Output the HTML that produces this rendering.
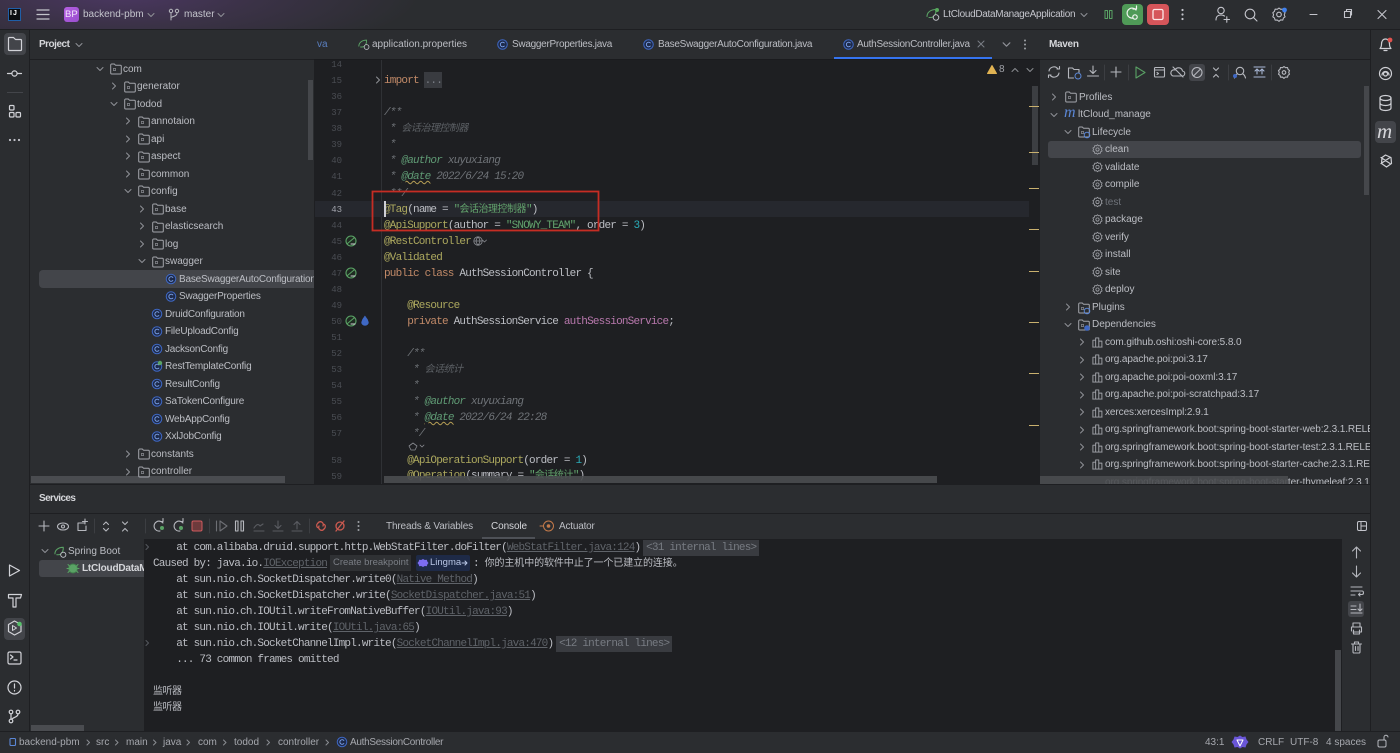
<!DOCTYPE html>
<html><head><meta charset="utf-8"><style>
html,body{margin:0;padding:0;width:1400px;height:753px;overflow:hidden;background:#2b2d30}
body{position:relative;font-family:"Liberation Sans","Noto Sans CJK SC",sans-serif;font-size:10px;color:#bcbec4}
.b{position:absolute}
.t{position:absolute;white-space:pre;line-height:16px;height:16px;margin-top:1px}
.q{letter-spacing:-.2px}
.h{letter-spacing:-.28px}
.v{letter-spacing:-.08px}
.m{font-family:"Liberation Mono","Noto Sans CJK SC",monospace;font-size:11px;letter-spacing:-.8px;color:#bcbec4}
.n{position:absolute;width:20px;left:322px;margin-top:1px;text-align:right;font-family:"Liberation Mono",monospace;font-size:9px;line-height:16px;color:#4a4d53}
.k{color:#c28a68}.a{color:#aca85e}.s{color:#62a26c}.c{color:#6f7378;font-style:italic}.d{color:#5f9a74;font-style:italic}.u{color:#2aacb8}.f{color:#b878ad}
.z{font-size:10px;letter-spacing:-.5px}
.l{color:#5f6369;text-decoration:underline;text-underline-offset:1px}
.chip{background:#393b40;color:#777b82;padding:0 3px;margin-left:-3px;display:inline-block;height:16px}
.w{text-decoration:underline wavy #b79f55 1px}
svg{position:absolute;left:0;top:0}
</style></head><body>
<!-- title bar -->
<div class="b" style="left:0;top:0;width:1400px;height:29px;background:radial-gradient(ellipse 300px 70px at 120px -6px,#4b3762 0%,#3b3247 45%,#2b2d30 100%)"></div>
<div class="b" style="left:0;top:29px;width:1400px;height:1px;background:#1e1f22"></div>
<div class="b" style="left:8px;top:8px;width:13px;height:13px;background:#0c0d10;border:1px solid #1f5fa8;box-sizing:border-box"></div>
<div class="t" style="left:10px;top:5px;font-size:7px;font-weight:bold;color:#fff;letter-spacing:1px">IJ</div>
<div class="b" style="left:64px;top:7px;width:15px;height:15px;border-radius:3px;background:linear-gradient(135deg,#b45fe0,#9a4fd0)"></div>
<div class="t" style="left:65px;top:6px;font-size:9.5px;color:#f0e4fa">BP</div>
<div class="t" style="left:83px;top:6px;color:#c4c5cc">backend-pbm</div>
<div class="t" style="left:184px;top:6px;color:#c4c5cc">master</div>
<div class="t" style="left:943px;top:6px;color:#c4c5cc;letter-spacing:-.3px">LtCloudDataManageApplication</div>
<div class="b" style="left:1122px;top:4px;width:21px;height:21px;border-radius:4px;background:#4f9a57"></div>
<div class="b" style="left:1147px;top:4px;width:22px;height:21px;border-radius:4px;background:#d5555a"></div>

<!-- left strip selection -->
<div class="b" style="left:29px;top:30px;width:1px;height:701px;background:#1e1f22"></div>
<div class="b" style="left:4px;top:33px;width:22px;height:22px;border-radius:4px;background:#43454a"></div>
<div class="b" style="left:7px;top:92px;width:16px;height:1px;background:#43454a"></div>
<div class="b" style="left:4px;top:618px;width:21px;height:22px;border-radius:4px;background:#43454a"></div>

<!-- project -->
<div class="t" style="left:39px;top:36px;font-weight:bold;color:#d5d6da;letter-spacing:-.5px">Project</div>
<div class="b" style="left:30px;top:59px;width:284px;height:1px;background:#1e1f22"></div>
<div class="b" style="left:39px;top:270px;width:275px;height:18px;background:#43454a;border-radius:4px 0 0 4px"></div>
<div class="t" style="left:123px;top:61px">com</div>
<div class="t" style="left:137px;top:78px">generator</div>
<div class="t" style="left:137px;top:96px">todod</div>
<div class="t" style="left:151px;top:113px">annotaion</div>
<div class="t" style="left:151px;top:131px">api</div>
<div class="t" style="left:151px;top:148px">aspect</div>
<div class="t" style="left:151px;top:166px">common</div>
<div class="t" style="left:151px;top:183px">config</div>
<div class="t" style="left:165px;top:201px">base</div>
<div class="t" style="left:165px;top:218px">elasticsearch</div>
<div class="t" style="left:165px;top:236px">log</div>
<div class="t" style="left:165px;top:253px">swagger</div>
<div class="t q" style="left:179px;top:271px">BaseSwaggerAutoConfiguration</div>
<div class="t q" style="left:179px;top:288px">SwaggerProperties</div>
<div class="t q" style="left:165px;top:306px">DruidConfiguration</div>
<div class="t q" style="left:165px;top:323px">FileUploadConfig</div>
<div class="t q" style="left:165px;top:341px">JacksonConfig</div>
<div class="t q" style="left:165px;top:358px">RestTemplateConfig</div>
<div class="t q" style="left:165px;top:376px">ResultConfig</div>
<div class="t q" style="left:165px;top:393px">SaTokenConfigure</div>
<div class="t q" style="left:165px;top:411px">WebAppConfig</div>
<div class="t q" style="left:165px;top:428px">XxlJobConfig</div>
<div class="t" style="left:151px;top:446px">constants</div>
<div class="t" style="left:151px;top:463px">controller</div>
<div class="b" style="left:308px;top:80px;width:5px;height:80px;background:#45474b"></div>
<div class="b" style="left:31px;top:476px;width:254px;height:7px;background:#4a4c50"></div>

<!-- editor -->
<div class="b" style="left:314px;top:30px;width:726px;height:454px;background:#1e1f22"></div>
<div class="b" style="left:314px;top:30px;width:726px;height:29px;background:#2b2d30"></div>
<div class="b" style="left:314px;top:59px;width:726px;height:1px;background:#1a1b1e"></div>
<div class="b" style="left:834px;top:57px;width:158px;height:2px;background:#3574f0"></div>
<div class="t" style="left:317px;top:36px;color:#5a7fc0">va</div>
<div class="t" style="left:372px;top:36px">application.properties</div>
<div class="t h" style="left:512px;top:36px">SwaggerProperties.java</div>
<div class="t h" style="left:658px;top:36px">BaseSwaggerAutoConfiguration.java</div>
<div class="t h" style="left:857px;top:36px">AuthSessionController.java</div>
<div class="b" style="left:381px;top:60px;width:1px;height:424px;background:#2f3135"></div>
<div class="b" style="left:315px;top:201px;width:714px;height:16px;background:#26282e"></div>
<div class="t" style="left:999px;top:61px;color:#a0a2a8">8</div>

<div class="n" style="top:56px">14</div><div class="n" style="top:72px">15</div><div class="n" style="top:88px">36</div><div class="n" style="top:104px">37</div><div class="n" style="top:120px">38</div><div class="n" style="top:136px">39</div><div class="n" style="top:152px">40</div><div class="n" style="top:168px">41</div><div class="n" style="top:185px">42</div><div class="n" style="top:201px;color:#a1a3ab">43</div><div class="n" style="top:217px">44</div><div class="n" style="top:233px">45</div><div class="n" style="top:249px">46</div><div class="n" style="top:265px">47</div><div class="n" style="top:281px">48</div><div class="n" style="top:297px">49</div><div class="n" style="top:313px">50</div><div class="n" style="top:329px">51</div><div class="n" style="top:345px">52</div><div class="n" style="top:361px">53</div><div class="n" style="top:377px">54</div><div class="n" style="top:393px">55</div><div class="n" style="top:409px">56</div><div class="n" style="top:425px">57</div><div class="n" style="top:452px">58</div><div class="n" style="top:468px">59</div>

<div class="b" style="left:424px;top:72px;width:18px;height:16px;background:#393b40"></div>
<div class="t m" style="left:384px;top:72px"><span class="k">import</span> <span style="color:#7a7e85">...</span></div>
<div class="t m c" style="left:384px;top:104px">/**</div>
<div class="t m c" style="left:384px;top:120px"> * <span class="z" style="color:#5c6065">会话治理控制器</span></div>
<div class="t m c" style="left:384px;top:136px"> *</div>
<div class="t m c" style="left:384px;top:152px"> * <span class="d">@author</span> xuyuxiang</div>
<div class="t m c" style="left:384px;top:168px"> * <span class="d w">@date</span> 2022/6/24 15:20</div>
<div class="t m c" style="left:384px;top:185px"> **/</div>
<div class="t m" style="left:384px;top:201px"><span class="a">@Tag</span>(name = <span class="s">"<span class="z">会话治理控制器</span>"</span>)</div>
<div class="t m" style="left:384px;top:217px"><span class="a">@ApiSupport</span>(author = <span class="s">"SNOWY_TEAM"</span>, order = <span class="u">3</span>)</div>
<div class="t m a" style="left:384px;top:233px">@RestController</div>
<div class="t m a" style="left:384px;top:249px">@Validated</div>
<div class="t m" style="left:384px;top:265px"><span class="k">public class</span> AuthSessionController {</div>
<div class="t m a" style="left:384px;top:297px">    @Resource</div>
<div class="t m" style="left:384px;top:313px">    <span class="k">private</span> AuthSessionService <span class="f">authSessionService</span>;</div>
<div class="t m c" style="left:384px;top:345px">    /**</div>
<div class="t m c" style="left:384px;top:361px">     * <span class="z" style="color:#5c6065">会话统计</span></div>
<div class="t m c" style="left:384px;top:377px">     *</div>
<div class="t m c" style="left:384px;top:393px">     * <span class="d">@author</span> xuyuxiang</div>
<div class="t m c" style="left:384px;top:409px">     * <span class="d w">@date</span> 2022/6/24 22:28</div>
<div class="t m c" style="left:384px;top:425px">     */</div>
<div class="t m" style="left:384px;top:452px">    <span class="a">@ApiOperationSupport</span>(order = <span class="u">1</span>)</div>
<div class="t m" style="left:384px;top:467px">    <span class="a">@Operation</span>(summary = <span class="s">"<span class="z">会话统计</span>"</span>)</div>
<div class="b" style="left:384px;top:201px;width:1.5px;height:16px;background:#ced0d6"></div>
<div class="b" style="left:1032px;top:86px;width:6px;height:79px;background:#3c3e42"></div>
<div class="b" style="left:1029px;top:106px;width:10px;height:1px;background:#c9b06e"></div>
<div class="b" style="left:1029px;top:152px;width:10px;height:1px;background:#c9b06e"></div>
<div class="b" style="left:1029px;top:188px;width:10px;height:1px;background:#c9b06e"></div>
<div class="b" style="left:1029px;top:229px;width:10px;height:1px;background:#c9b06e"></div>
<div class="b" style="left:1029px;top:271px;width:10px;height:1px;background:#c9b06e"></div>
<div class="b" style="left:1029px;top:322px;width:10px;height:1px;background:#c9b06e"></div>
<div class="b" style="left:1029px;top:373px;width:10px;height:1px;background:#c9b06e"></div>
<div class="b" style="left:1029px;top:425px;width:10px;height:1px;background:#c9b06e"></div>
<div class="b" style="left:384px;top:476px;width:553px;height:7px;background:#4a4c50;opacity:.9"></div>

<!-- maven -->
<div class="b" style="left:1040px;top:30px;width:332px;height:454px;background:#2b2d30"></div>
<div class="t" style="left:1049px;top:36px;font-weight:bold;color:#d5d6da;letter-spacing:-.3px">Maven</div>
<div class="b" style="left:1040px;top:59px;width:331px;height:1px;background:#1e1f22"></div>
<div class="b" style="left:1189px;top:64px;width:16px;height:17px;border-radius:3px;background:#43454a"></div>
<div class="b" style="left:1048px;top:141px;width:313px;height:17px;border-radius:3px;background:#43454a"></div>
<div class="t" style="left:1079px;top:89px">Profiles</div>
<div class="t" style="left:1064px;top:104px;font-family:'Liberation Serif',serif;font-style:italic;font-size:16px;color:#5b87d6">m</div>
<div class="t" style="left:1078px;top:106px">ltCloud_manage</div>
<div class="t" style="left:1092px;top:124px">Lifecycle</div>
<div class="t" style="left:1105px;top:141px">clean</div>
<div class="t" style="left:1105px;top:159px">validate</div>
<div class="t" style="left:1105px;top:176px">compile</div>
<div class="t" style="left:1105px;top:194px;color:#6f737a">test</div>
<div class="t" style="left:1105px;top:211px">package</div>
<div class="t" style="left:1105px;top:229px">verify</div>
<div class="t" style="left:1105px;top:246px">install</div>
<div class="t" style="left:1105px;top:264px">site</div>
<div class="t" style="left:1105px;top:281px">deploy</div>
<div class="t" style="left:1092px;top:299px">Plugins</div>
<div class="t" style="left:1092px;top:316px">Dependencies</div>
<div class="t v" style="left:1105px;top:334px">com.github.oshi:oshi-core:5.8.0</div>
<div class="t v" style="left:1105px;top:351px">org.apache.poi:poi:3.17</div>
<div class="t v" style="left:1105px;top:369px">org.apache.poi:poi-ooxml:3.17</div>
<div class="t v" style="left:1105px;top:386px">org.apache.poi:poi-scratchpad:3.17</div>
<div class="t v" style="left:1105px;top:404px">xerces:xercesImpl:2.9.1</div>
<div class="t v" style="left:1105px;top:421px">org.springframework.boot:spring-boot-starter-web:2.3.1.RELEASE</div>
<div class="t v" style="left:1105px;top:439px">org.springframework.boot:spring-boot-starter-test:2.3.1.RELEASE</div>
<div class="t v" style="left:1105px;top:456px">org.springframework.boot:spring-boot-starter-cache:2.3.1.RELEASE</div>
<div class="t v" style="left:1105px;top:474px">org.springframework.boot:spring-boot-starter-thymeleaf:2.3.1</div>
<div class="b" style="left:1364px;top:86px;width:5px;height:109px;background:#45474b"></div>
<div class="b" style="left:1040px;top:476px;width:248px;height:8px;background:#4a4c50;opacity:.9"></div>

<!-- right strip -->
<div class="b" style="left:1370px;top:30px;width:30px;height:701px;background:#2b2d30"></div>
<div class="b" style="left:1370px;top:30px;width:1px;height:701px;background:#1e1f22"></div>
<div class="b" style="left:1375px;top:121px;width:21px;height:22px;border-radius:4px;background:#43454a"></div>
<div class="t" style="left:1377px;top:122px;font-family:'Liberation Serif',serif;font-style:italic;font-size:21px;color:#d5d6da">m</div>

<!-- bottom panel -->
<div class="b" style="left:30px;top:484px;width:1340px;height:247px;background:#2b2d30"></div>
<div class="b" style="left:30px;top:484px;width:1340px;height:1px;background:#1e1f22"></div>
<div class="b" style="left:30px;top:513px;width:1340px;height:1px;background:#1e1f22"></div>
<div class="t" style="left:39px;top:490px;font-weight:bold;color:#d5d6da;letter-spacing:-.6px">Services</div>
<div class="t" style="left:386px;top:518px;letter-spacing:-.15px">Threads &amp; Variables</div>
<div class="t" style="left:491px;top:518px;color:#d5d6da;letter-spacing:-.1px">Console</div>
<div class="t" style="left:559px;top:518px;letter-spacing:-.2px">Actuator</div>
<div class="b" style="left:482px;top:537px;width:53px;height:2px;background:#4e5157"></div>
<div class="b" style="left:39px;top:560px;width:105px;height:17px;border-radius:3px 0 0 3px;background:#43454a"></div>
<div class="t" style="left:68px;top:543px">Spring Boot</div>
<div class="t" style="left:82px;top:560px;font-weight:bold;color:#d5d6da;letter-spacing:-.2px">LtCloudDataManageApplication</div>
<div class="b" style="left:31px;top:725px;width:53px;height:6px;background:#4a4c50"></div>

<div class="b" style="left:144px;top:539px;width:1198px;height:192px;background:#1e1f22"></div>
<div class="t m" style="left:153px;top:539px">    at com.alibaba.druid.support.http.WebStatFilter.doFilter(<span class="l">WebStatFilter.java:124</span>) <span class="chip">&lt;31 internal lines&gt;</span></div>
<div class="t m" style="left:153px;top:555px">Caused by: java.io.<span class="l">IOException</span></div>
<div class="b" style="left:330px;top:555px;width:81px;height:16px;background:#2f3134"></div>
<div class="t" style="left:333px;top:554px;font-size:9.5px;color:#7a7e85">Create breakpoint</div>
<div class="b" style="left:416px;top:555px;width:54px;height:16px;background:#1e2a47;border-radius:2px"></div>
<div class="t" style="left:430px;top:554px;font-size:9.5px;color:#b9c6e6">Lingma</div>
<div class="t m" style="left:473px;top:555px">: <span class="z" style="letter-spacing:-.1px">你的主机中的软件中止了一个已建立的连接。</span></div>
<div class="t m" style="left:153px;top:571px">    at sun.nio.ch.SocketDispatcher.write0(<span class="l">Native Method</span>)</div>
<div class="t m" style="left:153px;top:587px">    at sun.nio.ch.SocketDispatcher.write(<span class="l">SocketDispatcher.java:51</span>)</div>
<div class="t m" style="left:153px;top:603px">    at sun.nio.ch.IOUtil.writeFromNativeBuffer(<span class="l">IOUtil.java:93</span>)</div>
<div class="t m" style="left:153px;top:619px">    at sun.nio.ch.IOUtil.write(<span class="l">IOUtil.java:65</span>)</div>
<div class="t m" style="left:153px;top:635px">    at sun.nio.ch.SocketChannelImpl.write(<span class="l">SocketChannelImpl.java:470</span>) <span class="chip">&lt;12 internal lines&gt;</span></div>
<div class="t m" style="left:153px;top:651px">    ... 73 common frames omitted</div>
<div class="t m" style="left:153px;top:683px"><span class="z" style="letter-spacing:-.5px">监听器</span></div>
<div class="t m" style="left:153px;top:699px"><span class="z" style="letter-spacing:-.5px">监听器</span></div>
<div class="b" style="left:1335px;top:650px;width:6px;height:81px;background:#45474b"></div>
<div class="b" style="left:1348px;top:601px;width:16px;height:16px;border-radius:3px;background:#43454a"></div>

<!-- status -->
<div class="b" style="left:0;top:731px;width:1400px;height:22px;background:#2b2d30;border-top:1px solid #1e1f22;box-sizing:border-box"></div>
<div class="t" style="left:19px;top:734px;color:#a6a8ae">backend-pbm</div>
<div class="t" style="left:96px;top:734px;color:#a6a8ae">src</div>
<div class="t" style="left:126px;top:734px;color:#a6a8ae">main</div>
<div class="t" style="left:163px;top:734px;color:#a6a8ae">java</div>
<div class="t" style="left:198px;top:734px;color:#a6a8ae">com</div>
<div class="t" style="left:234px;top:734px;color:#a6a8ae">todod</div>
<div class="t" style="left:278px;top:734px;color:#a6a8ae">controller</div>
<div class="t" style="left:350px;top:734px;color:#a6a8ae;letter-spacing:-.3px">AuthSessionController</div>
<div class="t" style="left:1205px;top:734px;color:#a6a8ae">43:1</div>
<div class="t" style="left:1258px;top:734px;color:#a6a8ae">CRLF</div>
<div class="t" style="left:1290px;top:734px;color:#a6a8ae">UTF-8</div>
<div class="t" style="left:1326px;top:734px;color:#a6a8ae">4 spaces</div>

<!-- icons -->
<svg width="1400" height="753" viewBox="0 0 1400 753" fill="none" stroke-linecap="round" stroke-linejoin="round">
<defs>
<symbol id="cr" viewBox="0 0 8 8"><path d="M2.5 1l3 3-3 3" stroke="#8f9197" fill="none"/></symbol>
<symbol id="cd" viewBox="0 0 8 8"><path d="M1 2.5l3 3 3-3" stroke="#8f9197" fill="none"/></symbol>
<symbol id="fo" viewBox="0 0 12 12"><path d="M.7 10V2a1 1 0 0 1 1-1h2.6l1.3 1.3h4.700a1 1 0 0 1 1 1V10a1 1 0 0 1-1 1h-8.600a1 1 0 0 1-1-1z" stroke="#a3a5ab" fill="none"/><rect x="3.400" y="5.400" width="2.200" height="2.200" stroke="#8a8c92" stroke-width=".7" fill="none"/></symbol>
<symbol id="cl" viewBox="0 0 12 12"><circle cx="6" cy="6" r="5.200" stroke="#3f68c4" fill="#1d2a4a" stroke-width="1.100"/><path d="M8 4.300a2.500 2.500 0 1 0 0 3.400" stroke="#7ea4ee" fill="none"/></symbol>
<symbol id="ge" viewBox="0 0 12 12"><path d="M6 .8l1.200 1.200 1.800-.2.400 1.700 1.600.9-.7 1.600.7 1.600-1.600.9-.4 1.700-1.800-.2L6 11.200l-1.200-1.200-1.800.2-.4-1.700-1.600-.9.7-1.600-.7-1.600 1.600-.9.4-1.700 1.800.2z" stroke="#a3a5ab" stroke-width=".9" fill="none"/><circle cx="6" cy="6" r="1.800" stroke="#a3a5ab" stroke-width=".9" fill="none"/></symbol>
<symbol id="li" viewBox="0 0 12 12"><path d="M1 11V3.500h3V11M4 11V1h3.400v10M7.400 11V4.500h3.400V11M.8 11h10.200" stroke="#a3a5ab" fill="none"/></symbol>
<symbol id="sb" viewBox="0 0 14 14"><path d="M1 9.500c0-4 3.500-7 9-7 .2 4-1.500 8-5.500 8H3" stroke="#5aa265" stroke-width="1.100" fill="none"/><circle cx="10" cy="10.500" r="2.800" stroke="#c8cad0" stroke-width=".9" fill="#2b2d30"/></symbol>
<symbol id="bn" viewBox="0 0 12 12"><circle cx="6" cy="6" r="5" stroke="#5aa265" stroke-width="1.100" fill="#1f2b22"/><path d="M2.500 8.500L9 3" stroke="#5aa265" fill="none"/><path d="M6 9h4" stroke="#d0d2d6" fill="none"/></symbol>
</defs>

<!-- title icons -->
<g stroke="#c4c5cc" stroke-width="1.200"><path d="M37 10h12M37 14.500h12M37 19h12"/></g>
<use href="#cd" x="147" y="11" width="8" height="8"/>
<g stroke="#b6b7bd"><circle cx="171" cy="11" r="1.700"/><circle cx="177" cy="11" r="1.700"/><path d="M171 13v7M177 13c0 3-3 3-6 4.500"/></g>
<use href="#cd" x="217" y="11" width="8" height="8"/>
<use href="#sb" x="926" y="7" width="14" height="14"/>
<circle cx="937" cy="10" r="2" fill="#57a85c"/>
<use href="#cd" x="1080" y="11" width="8" height="8"/>
<g stroke="#5aa265"><rect x="1105" y="10.500" width="2.500" height="8"/><rect x="1109.500" y="10.500" width="2.500" height="8"/></g>
<g stroke="#f1f5f1" stroke-width="1.200"><path d="M1136 10a5 5 0 1 0-3 8"/><path d="M1133 9h3.500V6"/><circle cx="1135" cy="17" r="2.200"/></g>
<rect x="1153" y="9.500" width="10" height="10" rx="1.500" stroke="#fbe7e7" stroke-width="1.300"/>
<g fill="#c4c5cc"><circle cx="1182.500" cy="10" r="1.100"/><circle cx="1182.500" cy="14.500" r="1.100"/><circle cx="1182.500" cy="19" r="1.100"/></g>
<g stroke="#c4c5cc" stroke-width="1.100"><circle cx="1221" cy="10.500" r="3.200"/><path d="M1216 20c0-4 2.500-5 5-5 1.500 0 2.500.3 3.500 1M1224 19.500h5.500M1226.800 16.800v5.500"/><circle cx="1250" cy="14" r="4.800"/><path d="M1253.500 17.500l3.500 3.500"/><path d="M1279 8l1.700 1.300 2.200-.2.600 2.100 1.600 1.500-.9 2.100.9 2-1.700 1.200-.6 2.100-2.200-.2-1.600 1.500-1.700-1.400-2.200.1-.6-2.100-1.700-1.200.8-2-.8-2.100 1.700-1.500.6-2.100 2.200.2z" stroke-width="1"/><circle cx="1279" cy="14.500" r="2.300"/><path d="M1310 14.500h7"/><rect x="1344.500" y="11.500" width="6" height="6"/><path d="M1346.500 11v-1.500h5v5.500h-1"/><path d="M1378 10.500l8 8M1386 10.500l-8 8"/></g>
<circle cx="1284.500" cy="10" r="2.400" fill="#3f80ee"/>

<!-- left strip -->
<g stroke="#d2d3d8" stroke-width="1.200">
<path d="M9 50V39a1 1 0 0 1 1-1h4l2 2h5a1 1 0 0 1 1 1v9a1 1 0 0 1-1 1H10a1 1 0 0 1-1-1z" transform="translate(-.5 -.5)"/>
<circle cx="14.500" cy="73.500" r="2.600"/><path d="M7.500 73.500h4.500M17 73.500h4.500"/>
<rect x="9.500" y="105.500" width="4.500" height="4.500" rx="1"/><rect x="9.500" y="112.500" width="4.500" height="4.500" rx="1"/><rect x="16" y="112.500" width="4.500" height="4.500" rx="1"/>
<path d="M9.500 565v11l10-5.500z"/>
<path d="M8.500 594.500h13l-1 3.500H16v9h-3v-9H8.500z"/>
<path d="M14.500 621l6.500 3.500v7l-6.500 3.500-6-3.500v-7z"/><path d="M12.500 625.500v5l4-2.500z" stroke-width="1"/>
<rect x="8" y="652" width="13" height="12" rx="1.500"/><path d="M10.500 655l2.500 2-2.500 2M14 660h3"/>
<circle cx="14.500" cy="687.500" r="6.500"/><path d="M14.500 684v4M14.500 690.500v.5"/>
<circle cx="11" cy="712" r="1.800"/><circle cx="18" cy="712" r="1.800"/><circle cx="11" cy="721" r="1.800"/><path d="M11 714v5M18 714c0 3-4 3-6 5"/>
</g>
<g fill="#c4c5cc"><circle cx="10" cy="140" r="1.100"/><circle cx="14.500" cy="140" r="1.100"/><circle cx="19" cy="140" r="1.100"/></g>
<circle cx="19.500" cy="624" r="2.300" fill="#57c06a"/>

<!-- project icons -->
<use href="#cd" x="75" y="41" width="8" height="8"/>
<use href="#cd" x="96" y="65" width="8" height="8"/><use href="#fo" x="110" y="63" width="12" height="12"/>
<use href="#cr" x="110" y="82" width="8" height="8"/><use href="#fo" x="124" y="81" width="12" height="12"/>
<use href="#cd" x="110" y="100" width="8" height="8"/><use href="#fo" x="124" y="98" width="12" height="12"/>
<use href="#cr" x="124" y="117" width="8" height="8"/><use href="#fo" x="138" y="116" width="12" height="12"/>
<use href="#cr" x="124" y="135" width="8" height="8"/><use href="#fo" x="138" y="133" width="12" height="12"/>
<use href="#cr" x="124" y="152" width="8" height="8"/><use href="#fo" x="138" y="151" width="12" height="12"/>
<use href="#cr" x="124" y="170" width="8" height="8"/><use href="#fo" x="138" y="168" width="12" height="12"/>
<use href="#cd" x="124" y="187" width="8" height="8"/><use href="#fo" x="138" y="185" width="12" height="12"/>
<use href="#cr" x="138" y="205" width="8" height="8"/><use href="#fo" x="152" y="203" width="12" height="12"/>
<use href="#cr" x="138" y="222" width="8" height="8"/><use href="#fo" x="152" y="221" width="12" height="12"/>
<use href="#cr" x="138" y="240" width="8" height="8"/><use href="#fo" x="152" y="238" width="12" height="12"/>
<use href="#cd" x="138" y="257" width="8" height="8"/><use href="#fo" x="152" y="256" width="12" height="12"/>
<use href="#cl" x="165.500" y="273.500" width="11" height="11"/><use href="#cl" x="165.500" y="291" width="11" height="11"/>
<use href="#cl" x="151.500" y="308.500" width="11" height="11"/><use href="#cl" x="151.500" y="326" width="11" height="11"/><use href="#cl" x="151.500" y="343.500" width="11" height="11"/><use href="#cl" x="151.500" y="361" width="11" height="11"/><use href="#cl" x="151.500" y="378.500" width="11" height="11"/><use href="#cl" x="151.500" y="396" width="11" height="11"/><use href="#cl" x="151.500" y="413.500" width="11" height="11"/><use href="#cl" x="151.500" y="431" width="11" height="11"/>
<circle cx="160" cy="363" r="2.200" fill="#5aa265"/>
<use href="#cr" x="124" y="450" width="8" height="8"/><use href="#fo" x="138" y="448" width="12" height="12"/>
<use href="#cr" x="124" y="468" width="8" height="8"/><use href="#fo" x="138" y="466" width="12" height="12"/>

<!-- tabs -->
<use href="#sb" x="358" y="38" width="12" height="12"/>
<use href="#cl" x="497" y="39" width="11" height="11"/><use href="#cl" x="643" y="39" width="11" height="11"/><use href="#cl" x="843" y="39" width="11" height="11"/>
<path d="M978 41l6 6M984 41l-6 6" stroke="#7a7e85"/>
<use href="#cd" x="1002" y="40" width="9" height="9"/>
<g fill="#a0a2a8"><circle cx="1025" cy="40.500" r="1"/><circle cx="1025" cy="44.500" r="1"/><circle cx="1025" cy="48.500" r="1"/></g>
<path d="M992 65l4.500 8h-9z" fill="#e0b252" stroke="#e0b252" transform="translate(0 .5)"/>
<path d="M1012 71.500l3-3 3 3" stroke="#8a8c92"/><path d="M1027 68.500l3 3 3-3" stroke="#8a8c92"/>
<use href="#cr" x="374" y="76" width="8" height="8"/>
<use href="#bn" x="345" y="235" width="12" height="12"/><use href="#bn" x="345" y="267" width="12" height="12"/><use href="#bn" x="345" y="315" width="12" height="12"/>
<path d="M365 316l2.500 3.500 1 3a3.500 3 0 0 1-7 0l1-3z" fill="#3f68c4" stroke="#3f68c4" stroke-width=".5"/>
<g stroke="#8a8c92" stroke-width=".8"><circle cx="478" cy="241" r="4.200"/><path d="M474 241h8M478 237c-2.500 2.500-2.500 5.500 0 8M478 237c2.500 2.500 2.500 5.500 0 8"/><path d="M482.500 240l2 2 2-2"/><path d="M409 446l4-3 4 3-2 4h-4z"/><path d="M420 445l2 2 2-2"/></g>

<!-- maven toolbar -->
<g stroke="#b6b8be" stroke-width="1.100">
<path d="M1049 71a5 5 0 0 1 9-2M1059 73a5 5 0 0 1-9 2M1057 69h2.500v-2.500M1051 75h-2.500v2.500"/>
<path d="M1068.500 78V68h4l1.500 1.500h5v3"/><path d="M1068.500 78h5"/>
<path d="M1093 66v7M1090 70.500l3 3 3-3M1087.500 76h11"/>
<path d="M1116 67v10M1111 72h10"/>
<path d="M1136 67v11l9-5.500z" stroke="#5aa265"/>
<rect x="1154.500" y="67.500" width="10" height="9.500" rx="1"/><path d="M1154.500 70h10M1157 72.500l1.500 1-1.500 1"/>
<path d="M1173 76h9a2.500 2.500 0 0 0 .5-5 4 4 0 0 0-7.500-1 3 3 0 0 0-2 6zM1173 67l10 10"/>
<circle cx="1197" cy="72.500" r="5"/><path d="M1193.500 76l7-7"/>
<path d="M1213.500 68l2.500 2.500 2.500-2.500M1213.500 77l2.500-2.500 2.500 2.500"/>
<circle cx="1240" cy="71" r="3.700"/><path d="M1234.500 78c.5-2 1-3 2.500-4M1245.500 78c-.5-2-1-3-2.500-4"/>
<path d="M1254 67h11M1254 77h11M1257 74v-5M1255 71l2-2 2 2M1262 74v-5M1260 71l2-2 2 2" stroke="#a9b8d6"/>
<path d="M1284 66.500l1.500 1.200 2-.2.500 1.800 1.500 1.300-.8 1.800.8 1.800-1.500 1.100-.5 1.900-2-.2-1.500 1.400-1.500-1.300-2 .1-.5-1.900-1.500-1.100.8-1.800-.8-1.800 1.500-1.300.5-1.800 2 .2z"/><circle cx="1284" cy="72.500" r="1.800"/>
</g>
<g stroke="#3c3e42"><path d="M1104.500 65v15M1128.500 65v15M1228.500 65v15M1271.500 65v15"/></g>
<circle cx="1235" cy="76" r="2" fill="#3f68c4"/>
<circle cx="1078" cy="76" r="3" stroke="#5b87d6"/>

<!-- maven tree icons -->
<use href="#cr" x="1050" y="93" width="8" height="8"/><use href="#fo" x="1065" y="91" width="12" height="12"/>
<use href="#cd" x="1050" y="111" width="8" height="8"/>
<use href="#cd" x="1064" y="128" width="8" height="8"/><use href="#fo" x="1078" y="126" width="12" height="12"/><circle cx="1087" cy="135" r="2.800" stroke="#5b87d6"/>
<use href="#ge" x="1092" y="144" width="11" height="11"/><use href="#ge" x="1092" y="161.500" width="11" height="11"/><use href="#ge" x="1092" y="179" width="11" height="11"/><use href="#ge" x="1092" y="196.500" width="11" height="11"/><use href="#ge" x="1092" y="214" width="11" height="11"/><use href="#ge" x="1092" y="231.500" width="11" height="11"/><use href="#ge" x="1092" y="249" width="11" height="11"/><use href="#ge" x="1092" y="266.500" width="11" height="11"/><use href="#ge" x="1092" y="284" width="11" height="11"/>
<use href="#cr" x="1064" y="303" width="8" height="8"/><use href="#fo" x="1078" y="302" width="12" height="12"/><circle cx="1087" cy="311" r="2.800" stroke="#5b87d6"/>
<use href="#cd" x="1064" y="321" width="8" height="8"/><use href="#fo" x="1078" y="319" width="12" height="12"/><circle cx="1087" cy="328" r="2.800" fill="#3f68c4"/>
<use href="#cr" x="1078" y="338" width="8" height="8"/><use href="#li" x="1092" y="337" width="11" height="11"/>
<use href="#cr" x="1078" y="356" width="8" height="8"/><use href="#li" x="1092" y="354" width="11" height="11"/>
<use href="#cr" x="1078" y="373" width="8" height="8"/><use href="#li" x="1092" y="372" width="11" height="11"/>
<use href="#cr" x="1078" y="391" width="8" height="8"/><use href="#li" x="1092" y="389" width="11" height="11"/>
<use href="#cr" x="1078" y="408" width="8" height="8"/><use href="#li" x="1092" y="407" width="11" height="11"/>
<use href="#cr" x="1078" y="426" width="8" height="8"/><use href="#li" x="1092" y="424" width="11" height="11"/>
<use href="#cr" x="1078" y="443" width="8" height="8"/><use href="#li" x="1092" y="442" width="11" height="11"/>
<use href="#cr" x="1078" y="461" width="8" height="8"/><use href="#li" x="1092" y="459" width="11" height="11"/>

<!-- right strip icons -->
<g stroke="#cfd0d5" stroke-width="1.200">
<path d="M1380 48.500c1-1 1.500-2 1.500-4.500 0-3 1.700-5 4-5s4 2 4 5c0 2.500.5 3.500 1.500 4.500zM1384 50.500h3"/>
<circle cx="1385.500" cy="73.500" r="6"/><path d="M1382 75a3.500 3.500 0 1 1 7 0"/><circle cx="1385.500" cy="74" r="2"/>
<ellipse cx="1385.500" cy="98" rx="5.500" ry="2.500"/><path d="M1380 98v10c0 1.500 2.500 2.500 5.500 2.500s5.500-1 5.500-2.500V98M1380 103c0 1.500 2.500 2.500 5.500 2.500s5.500-1 5.500-2.500"/>
<path d="M1385.500 155l5.500 2.500.5 6-5 3.500-5-3.500.5-6zM1381 157.500l9 6M1390 157.500l-9 6" />
</g>
<circle cx="1390" cy="40" r="2.400" fill="#e0534f"/>

<!-- services icons -->
<g stroke="#b6b8be" stroke-width="1.100">
<path d="M44 521v10M39 526h10"/><ellipse cx="63" cy="526.500" rx="5.500" ry="3.500"/><circle cx="63" cy="526.500" r="1.500"/>
<path d="M85 523h-7v7.500h8V526M85 519v5M82.500 521.500h5"/>
<path d="M103.500 524.500l2.500-2.500 2.500 2.500M103.500 528.500l2.500 2.500 2.500-2.500"/>
<path d="M122.500 522l2.500 2.500 2.500-2.500M122.500 531l2.500-2.500 2.500 2.500"/>
<path d="M163 523a5 5 0 1 0-3 8M160 521.500h3v-3"/><path d="M183 523a5 5 0 1 0-3 8M180 521.500h3v-3"/>
</g>
<g stroke="#6d6f74" stroke-width="1.100"><path d="M216.500 521v10"/><path d="M220 521v10l7-5z"/></g>
<g stroke="#b6b8be" stroke-width="1.100"><rect x="235.500" y="521" width="2.500" height="10"/><rect x="241" y="521" width="2.500" height="10"/></g>
<g stroke="#5a5c61" stroke-width="1.100"><path d="M254 528c2-3 4-5 6-2l3-2M254 531h10M278 521v7M275 525.500l3 3 3-3M273 531h10M297 529v-7M294 524.500l3-3 3 3M292 531h10"/></g>
<circle cx="162" cy="528" r="2" fill="#5aa265"/><circle cx="181" cy="528" r="2" fill="#5aa265"/>
<rect x="192" y="521" width="10" height="10" rx="1.500" fill="#6e3a3c" stroke="#cf5a5e"/>
<g stroke="#cc5a50" stroke-width="1.300"><path d="M317.500 527.500a3 3 0 0 1 0-4l1.500-1.500a3 3 0 0 1 4 4M324.500 524.500a3 3 0 0 1 0 4l-1.500 1.500a3 3 0 0 1-4-4"/><circle cx="340" cy="526" r="4"/><path d="M336 531l8-10"/></g>
<g stroke="#3c3e42"><path d="M94.500 519v14M145.500 519v14M209.500 519v14M309.500 519v14"/></g>
<g fill="#a0a2a8"><circle cx="358.500" cy="522" r="1"/><circle cx="358.500" cy="526" r="1"/><circle cx="358.500" cy="530" r="1"/></g>
<circle cx="548.500" cy="526" r="5" stroke="#c47a4a"/><circle cx="548.500" cy="526" r="1.800" fill="#c47a4a"/><path d="M540 526h3" stroke="#c47a4a"/>
<rect x="1357.500" y="521.500" width="9" height="9" rx="1.500" stroke="#c4c5cc"/><path d="M1361 521.500v9M1361 526h5.500" stroke="#c4c5cc"/>
<use href="#cd" x="41" y="547" width="8" height="8"/><use href="#sb" x="54" y="545" width="13" height="13"/>
<circle cx="73" cy="568.500" r="4.500" fill="#5aa265" stroke="#3f7d4a"/><path d="M68 564.500l1.500 1.500M78 564.500l-1.500 1.500M67 568.500h1.500M79 568.500h-1.500M68 572.500l1.500-1.500M78 572.500l-1.500-1.500" stroke="#5aa265"/>
<path d="M146 544.500l2.500 2.500-2.500 2.500M146 640.500l2.500 2.500-2.500 2.500" stroke="#55585e"/>
<g stroke="#b6b8be" stroke-width="1.100">
<path d="M1356.500 558v-11M1352.500 551l4-4 4 4M1356.500 566v11M1352.500 573l4 4 4-4"/>
<path d="M1351 587h11M1351 591h11c2 0 2 3.500 0 3.500h-3M1351 595h4M1360 593l-1.500 1.500 1.500 1.500"/>
<path d="M1351 606h5M1351 609.500h5M1351 613h11M1360 604v7M1358 609l2 2 2-2"/>
<path d="M1353 627v-4h7v4M1351.500 631v-4h10v5h-2M1353 632h7M1353.500 630v4h6v-4"/>
<path d="M1351.500 644h10M1353 644v8a1 1 0 0 0 1 1h5a1 1 0 0 0 1-1v-8M1354.500 644v-2h4v2M1355.500 646.500v4M1358 646.500v4"/>
</g>

<!-- chip logo -->
<path d="M423 559l1.800 1 2-.3.500 1.800 1.200 1.500-1.200 1.500-.5 1.800-2-.3-1.800 1-1.800-1-2 .3-.5-1.800-1.200-1.500 1.200-1.500.5-1.800 2 .3z" fill="#7c6cf0"/>
<path d="M462 563h5M465 561l2 2-2 2" stroke="#b9c6e6"/>

<!-- status icons -->
<rect x="10" y="738.500" width="5.500" height="7" rx="1" stroke="#5b87d6" stroke-width="1.100"/>
<g stroke="#8a8c92"><path d="M87 740l2.500 2.500-2.500 2.500M115.500 740l2.500 2.500-2.500 2.500M153.500 740l2.500 2.500-2.500 2.500M187 740l2.500 2.500-2.500 2.500M223.500 740l2.500 2.500-2.500 2.500M267 740l2.500 2.500-2.500 2.500M326 740l2.500 2.500-2.500 2.500"/></g>
<use href="#cl" x="336.500" y="736.500" width="11" height="11"/>
<path d="M1240 735.500l2.500 1.500 3-.5 1 3 2 2.500-2 2.500-1 3-3-.5-2.500 1.500-2.500-1.500-3 .5-1-3-2-2.500 2-2.500 1-3 3 .5z" fill="#6a56d8"/><path d="M1237 740h6l-3 6z" stroke="#fff"/>
<g stroke="#b6b8be"><rect x="1378" y="740" width="8" height="7" rx="1.500"/><path d="M1384 740v-2.500a2 2 0 0 1 4-.5"/></g>

<!-- red rectangle -->
<rect x="372.500" y="191.500" width="226" height="39" stroke="#c62d24" stroke-width="1.800" stroke-linejoin="miter"/>
</svg>
</body></html>
